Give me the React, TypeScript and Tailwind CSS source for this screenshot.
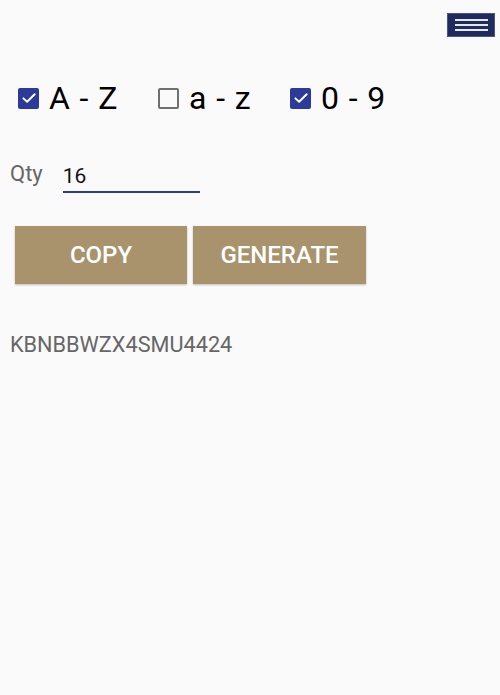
import React, { useState } from "react";

function Check({ checked }: { checked: boolean }) {
  if (checked) {
    return (
      <span className="flex h-[21px] w-[21px] items-center justify-center rounded-[2px] bg-[#2c3a9a]">
        <svg width="18" height="18" viewBox="0 0 24 24" fill="none" stroke="white" strokeWidth="2.6" strokeLinecap="round" strokeLinejoin="round">
          <path d="M4.5 12.5l5 4.5L19.5 7" />
        </svg>
      </span>
    );
  }
  return <span className="block h-[21px] w-[21px] rounded-[2px] border-[2px] border-[#6f6f6f]" />;
}

export default function App() {
  const [qty, setQty] = useState("16");
  const opts = [
    { label: "A - Z", on: true, w: "w-[140px]" },
    { label: "a - z", on: false, w: "w-[132px]" },
    { label: "0 - 9", on: true, w: "" },
  ];

  return (
    <div className="min-h-[695px] w-[500px] bg-[#fafafa] font-['Roboto',sans-serif]">
      <div className="flex justify-end pr-[5px] pt-[13px]">
        <button className="flex h-[24px] w-[48px] flex-col items-center justify-center gap-[3px] border border-[#4a5680] bg-[#1f2b5e]">
          <span className="block h-[2px] w-[33px] bg-[#e6e8f0]" />
          <span className="block h-[2px] w-[33px] bg-[#e6e8f0]" />
          <span className="block h-[2px] w-[33px] bg-[#e6e8f0]" />
        </button>
      </div>

      <div className="mt-[50px] flex items-center pl-[18px]">
        {opts.map((o) => (
          <label key={o.label} className={`flex items-center ${o.w}`}>
            <Check checked={o.on} />
            <span className="ml-[10px] text-[32px] leading-[22px] tracking-[0.9px] text-black">{o.label}</span>
          </label>
        ))}
      </div>

      <div className="mt-[54px] flex items-end pl-[10px]">
        <span className="mb-[8px] text-[22px] leading-none text-[#666]">Qty</span>
        <input
          value={qty}
          onChange={(e) => setQty(e.target.value)}
          className="ml-[20px] w-[137px] border-b-2 border-[#2c3a9a] bg-transparent pb-[4px] text-[21px] leading-[22px] text-[#111] outline-none"
        />
      </div>

      <div className="mt-[33px] flex gap-[6px] pl-[15px]">
        <button className="h-[58px] w-[172px] bg-[#a8936d] text-[24px] font-medium text-white shadow-[0_1px_2px_rgba(0,0,0,0.25)]">
          COPY
        </button>
        <button className="h-[58px] w-[173px] bg-[#a8936d] text-[24px] font-medium text-white shadow-[0_1px_2px_rgba(0,0,0,0.25)]">
          GENERATE
        </button>
      </div>

      <div className="mt-[50px] pl-[10px] text-[21.7px] leading-none text-[#666]">KBNBBWZX4SMU4424</div>
    </div>
  );
}
